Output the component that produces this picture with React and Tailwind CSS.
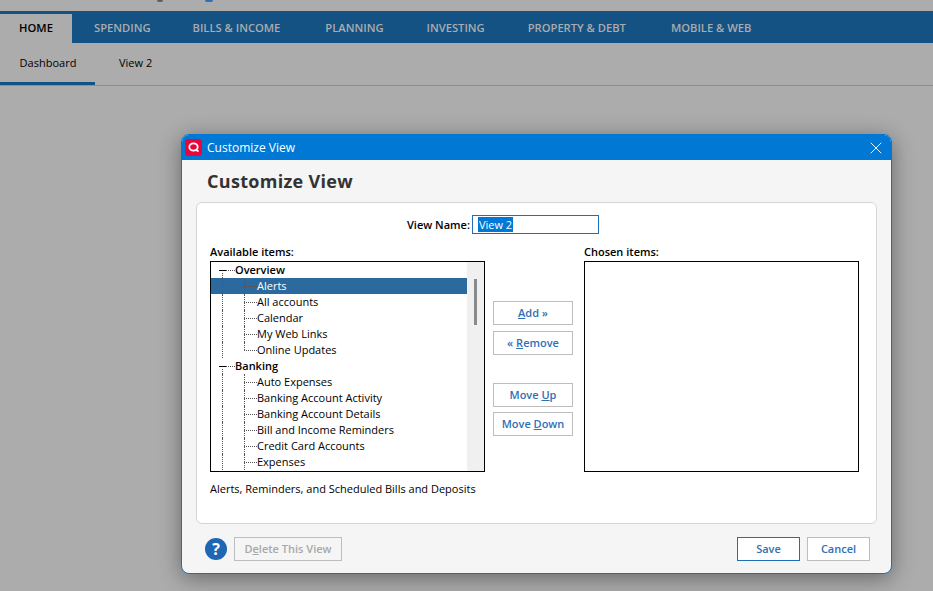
import { X } from 'lucide-react';

const navItems = [
  ['SPENDING', 'ml-[22px]'],
  ['BILLS & INCOME', 'ml-[42px]'],
  ['PLANNING', 'ml-[45px]'],
  ['INVESTING', 'ml-[43px]'],
  ['PROPERTY & DEBT', 'ml-[43px]'],
  ['MOBILE & WEB', 'ml-[45px]'],
];

const overview = ['Alerts', 'All accounts', 'Calendar', 'My Web Links', 'Online Updates'];
const banking = [
  'Auto Expenses',
  'Banking Account Activity',
  'Banking Account Details',
  'Bill and Income Reminders',
  'Credit Card Accounts',
  'Expenses',
];

function GroupRow({ label }) {
  return (
    <div className="relative flex h-4 items-center pl-[8px] font-semibold">
      <span className="h-px w-[7px] bg-black" />
      <span className="w-[9px] border-t border-dotted border-[#555]" />
      <span>{label}</span>
      <span className="absolute left-[11px] top-[11px] bottom-0 border-l border-dotted border-[#555]" />
    </div>
  );
}

function ItemRow({ label, selected, last }) {
  return (
    <div className={`relative flex h-4 items-center pl-[33px] ${selected ? 'bg-[#2b6a9f] text-white' : ''}`}>
      <span className="w-[13px] border-t border-dotted border-[#555]" />
      <span>{label}</span>
      <span className="absolute left-[11px] top-0 bottom-0 border-l border-dotted border-[#555]" />
      <span className={`absolute left-[33px] top-0 border-l border-dotted border-[#555] ${last ? 'h-2' : 'bottom-0'}`} />
    </div>
  );
}

function SideButton({ children, className = '' }) {
  return (
    <button className={`flex h-6 w-20 items-center justify-center border border-[#bdbdbd] bg-white text-[11px] font-semibold text-[#2f6fb7] ${className}`}>
      {children}
    </button>
  );
}

export default function App() {
  return (
    <div className="relative h-[591px] w-[933px] overflow-hidden bg-[#acacac] font-['Open_Sans',sans-serif]">
      <div className="flex h-[11px] items-start">
        <span className="ml-[157px] h-[2px] w-[6px] rounded-b-full bg-[#5f5f5f]" />
        <span className="ml-[42px] h-[2px] w-[8px] rounded-b-full bg-[#2f6fb7]" />
      </div>

      <div className="flex h-8 items-end bg-[#145284] text-[11.2px] font-semibold text-[#acacac]">
        <div className="flex h-[29px] w-[72px] items-center justify-center bg-[#acacac] text-black">HOME</div>
        {navItems.map(([label, spacing]) => (
          <div key={label} className={`flex h-full items-center pt-[2px] ${spacing}`}>
            {label}
          </div>
        ))}
      </div>

      <div className="flex h-[43px] border-b border-[#8f8f8f] text-[11px] text-black">
        <div className="flex h-[42px] w-[95px] items-center justify-center border-b-[3px] border-[#145284] pl-[1px] pt-[1px]">Dashboard</div>
        <div className="ml-6 flex h-[42px] items-center pb-[2px]">View 2</div>
      </div>

      <div className="absolute left-[181px] top-[134px] flex h-[440px] w-[711px] flex-col overflow-hidden rounded-lg border border-[#0078d4] bg-[#f5f5f5] shadow-[0_4px_22px_rgba(0,0,0,0.4)]">
        <div className="flex h-[25px] shrink-0 items-center bg-[#0078d4] pl-[3px] pr-[5px] text-white">
          <svg width="17" height="17" viewBox="0 0 17 17">
            <rect width="17" height="17" rx="3" fill="#e8063c" />
            <ellipse cx="8.5" cy="8" rx="4.2" ry="3.6" fill="none" stroke="#fff" strokeWidth="1.8" />
            <path d="M10.5 10.5 L13.5 12.5" stroke="#fff" strokeWidth="1.8" />
          </svg>
          <span className="ml-[5px] text-[12px]">Customize View</span>
          <X className="ml-auto" size={20} strokeWidth={1.1} />
        </div>

        <h1 className="ml-[25px] mt-[9px] text-[18px] leading-[24px] font-bold tracking-[0.3px] text-[#333]">Customize View</h1>

        <div className="mx-[14px] mt-[9px] h-[322px] rounded-md border border-[#d5d5d5] bg-white px-[13px] pt-[12px] text-[11px] leading-4 text-black">
          <div className="flex h-[19px] items-center pl-[197px]">
            <label className="font-semibold">View Name:</label>
            <div className="ml-[2px] flex h-[19px] w-[127px] items-center border border-[#1f6fb5] pl-[5px]">
              <span className="bg-[#0078d7] px-px leading-[15px] text-white">View 2</span>
            </div>
          </div>

          <div className="mt-[11px] flex">
            <div className="w-[275px]">
              <div className="h-4 font-semibold leading-[14px]">Available items:</div>
              <div className="flex h-[211px] overflow-hidden border border-black">
                <div className="w-[256px] overflow-hidden">
                  <GroupRow label="Overview" />
                  {overview.map((item, i) => (
                    <ItemRow key={item} label={item} selected={i === 0} last={i === overview.length - 1} />
                  ))}
                  <GroupRow label="Banking" />
                  {banking.map((item) => (
                    <ItemRow key={item} label={item} />
                  ))}
                </div>
                <div className="flex-1 bg-[#f0f0f0] pl-[7px] pt-[17px]">
                  <div className="h-[46px] w-[3px] bg-[#8a8a8a]" />
                </div>
              </div>
              <p className="mt-[9px] text-[11px]">Alerts, Reminders, and Scheduled Bills and Deposits</p>
            </div>

            <div className="ml-2 flex w-20 flex-col pt-[56px]">
              <SideButton><span><u>A</u>dd »</span></SideButton>
              <SideButton className="mt-[6px]"><span>« <u>R</u>emove</span></SideButton>
              <SideButton className="mt-[28px]"><span>Move <u>U</u>p</span></SideButton>
              <SideButton className="mt-[5px]"><span>Move <u>D</u>own</span></SideButton>
            </div>

            <div className="ml-[11px] w-[275px]">
              <div className="h-4 font-semibold leading-[14px]">Chosen items:</div>
              <div className="h-[211px] border border-black" />
            </div>
          </div>
        </div>

        <div className="mt-[13px] flex items-center pl-[23px] pr-[21px]">
          <svg width="22" height="22" viewBox="0 0 22 22">
            <circle cx="11" cy="11" r="11" fill="#1f66b3" />
            <text x="11" y="16.5" textAnchor="middle" fontSize="16" fontWeight="700" fill="#fff" fontFamily="Open Sans, sans-serif">?</text>
          </svg>
          <button className="ml-[7px] flex h-6 w-[108px] items-center justify-center border border-[#bdbdbd] text-[11px] font-semibold text-[#a8a8a8]">
            <span>D<u>e</u>lete This View</span>
          </button>
          <button className="ml-auto flex h-6 w-[63px] items-center justify-center border border-[#1f6fb5] bg-white text-[11px] font-semibold text-[#2f6fb7]">Save</button>
          <button className="ml-[7px] flex h-6 w-[63px] items-center justify-center border border-[#bdbdbd] bg-white text-[11px] font-semibold text-[#2f6fb7]">Cancel</button>
        </div>
      </div>
    </div>
  );
}
